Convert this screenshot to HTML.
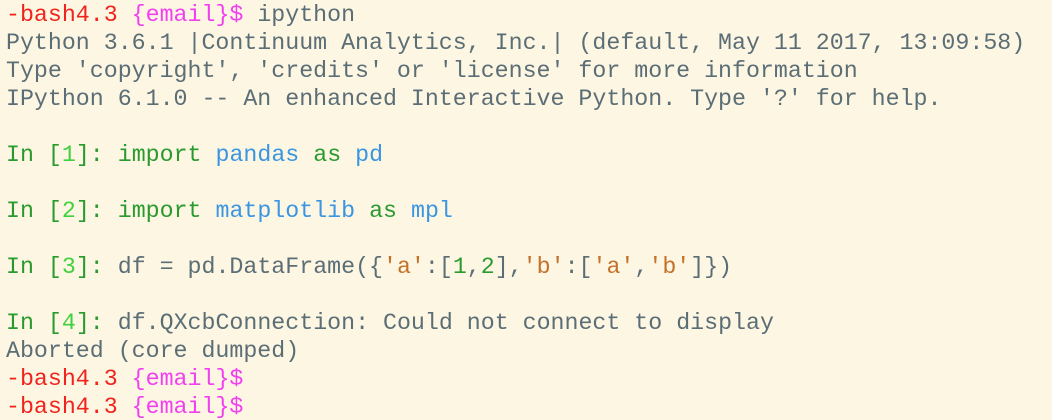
<!DOCTYPE html>
<html><head><meta charset="utf-8"><style>
html,body{margin:0;padding:0;background:#fdf6e3;width:1052px;height:420px;overflow:hidden}
pre{margin:0;padding:1px 0 0 6px;font-family:"Liberation Mono","DejaVu Sans Mono",monospace;font-size:23.27px;line-height:28px;color:#5b6e76;white-space:pre}
.r{color:#f0241c}.m{color:#f23ff0}.g{color:#2a9a2f}.G{color:#3fd13f}.b{color:#3a95e2}.o{color:#c4712a}
</style></head><body><pre><span class="r">-bash4.3</span> <span class="m">{email}$</span> ipython
Python 3.6.1 |Continuum Analytics, Inc.| (default, May 11 2017, 13:09:58)
Type 'copyright', 'credits' or 'license' for more information
IPython 6.1.0 -- An enhanced Interactive Python. Type '?' for help.

<span class="g">In [</span><span class="G">1</span><span class="g">]:</span> <span class="g">import</span> <span class="b">pandas</span> <span class="g">as</span> <span class="b">pd</span>

<span class="g">In [</span><span class="G">2</span><span class="g">]:</span> <span class="g">import</span> <span class="b">matplotlib</span> <span class="g">as</span> <span class="b">mpl</span>

<span class="g">In [</span><span class="G">3</span><span class="g">]:</span> df = pd.DataFrame({<span class="o">'a'</span>:[<span class="g">1</span>,<span class="g">2</span>],<span class="o">'b'</span>:[<span class="o">'a'</span>,<span class="o">'b'</span>]})

<span class="g">In [</span><span class="G">4</span><span class="g">]:</span> df.QXcbConnection: Could not connect to display
Aborted (core dumped)
<span class="r">-bash4.3</span> <span class="m">{email}$</span>
<span class="r">-bash4.3</span> <span class="m">{email}$</span></pre></body></html>
